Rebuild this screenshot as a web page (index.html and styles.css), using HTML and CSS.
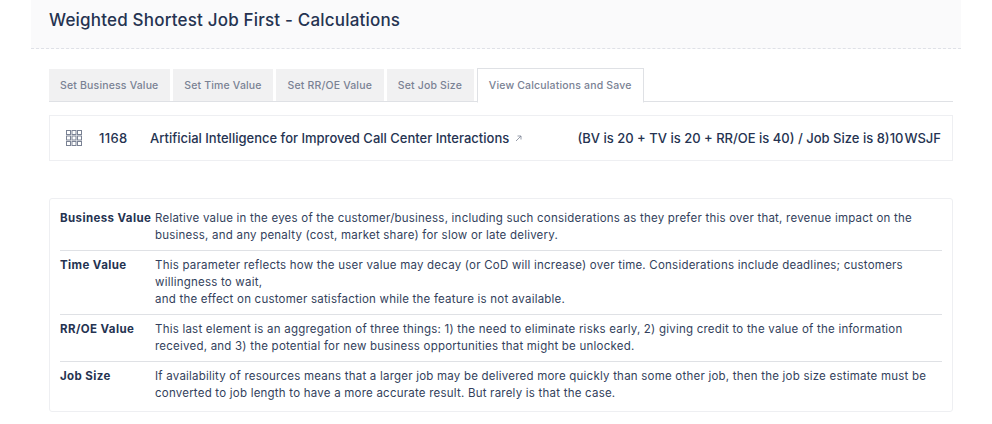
FILE: index.html
```html
<!DOCTYPE html>
<html lang="en">
<head>
    <meta charset="UTF-8">
    <title>Weighted Shortest Job First - Calculations</title>
    <link rel="stylesheet" href="styles.css">
</head>
<body>
    <div class="page">
        <div class="page-header">
            <h1>Weighted Shortest Job First - Calculations</h1>
        </div>
        <div class="content">
            <div class="tabs">
                <a class="tab">Set Business Value</a>
                <a class="tab">Set Time Value</a>
                <a class="tab">Set RR/OE Value</a>
                <a class="tab">Set Job Size</a>
                <a class="tab active">View Calculations and Save</a>
            </div>

            <div class="job-row">
                <svg class="grid-icon" width="16" height="16" viewBox="0 0 16 16" fill="none" stroke="#7a8294" stroke-width="1">
                    <rect x="0.5" y="0.5" width="4" height="4"/>
                    <rect x="6" y="0.5" width="4" height="4"/>
                    <rect x="11.5" y="0.5" width="4" height="4"/>
                    <rect x="0.5" y="6" width="4" height="4"/>
                    <rect x="6" y="6" width="4" height="4"/>
                    <rect x="11.5" y="6" width="4" height="4"/>
                    <rect x="0.5" y="11.5" width="4" height="4"/>
                    <rect x="6" y="11.5" width="4" height="4"/>
                    <rect x="11.5" y="11.5" width="4" height="4"/>
                </svg>
                <span class="job-id">1168</span>
                <span class="job-name">Artificial Intelligence for Improved Call Center Interactions</span>
                <svg class="ext-icon" width="7" height="7" viewBox="0 0 7 7" fill="none" stroke="#7c8494" stroke-width="0.8">
                    <path d="M1 6 L6 1 M2.5 1 H6 V4.5"/>
                </svg>
                <span class="job-calc">(BV is 20 + TV is 20 + RR/OE is 40) / Job Size is 8)</span>
                <span class="job-score">10</span>
                <span class="job-label">WSJF</span>
            </div>

            <table class="legend">
                <tr>
                    <th>Business Value</th>
                    <td>Relative value in the eyes of the customer/business, including such considerations as they prefer this over that, revenue impact on the business, and any penalty (cost, market share) for slow or late delivery.</td>
                </tr>
                <tr>
                    <th>Time Value</th>
                    <td>This parameter reflects how the user value may decay (or CoD will increase) over time. Considerations include deadlines; customers willingness to wait,<br>and the effect on customer satisfaction while the feature is not available.</td>
                </tr>
                <tr>
                    <th>RR/OE Value</th>
                    <td>This last element is an aggregation of three things: 1) the need to eliminate risks early, 2) giving credit to the value of the information received, and 3) the potential for new business opportunities that might be unlocked.</td>
                </tr>
                <tr>
                    <th>Job Size</th>
                    <td>If availability of resources means that a larger job may be delivered more quickly than some other job, then the job size estimate must be converted to job length to have a more accurate result. But rarely is that the case.</td>
                </tr>
            </table>
        </div>
    </div>
</body>
</html>
```

FILE: styles.css
```css
body {
    margin: 0;
    background: #fff;
    font-family: Inter, "Liberation Sans", sans-serif;
    color: #253351;
    overflow: hidden;
}

.page {
    margin: 0 31px;
}

.page-header {
    height: 48px;
    padding: 0 18px;
    display: flex;
    align-items: center;
    background: #fafafb;
    border-bottom: 1px dashed #dfe1e7;
}

h1 {
    margin: 0 0 9px;
    font-size: 17px;
    font-weight: 500;
    letter-spacing: 0.19px;
    color: #253351;
}

.content {
    padding: 20px 8px 0 18px;
}

.tabs {
    display: flex;
    gap: 3px;
    height: 33px;
    box-sizing: border-box;
    border-bottom: 1px solid #dfe1e5;
}

.tab {
    display: flex;
    align-items: center;
    padding: 0 11.75px 0 11px;
    height: 32px;
    background: #f1f1f2;
    font-size: 10.5px;
    font-weight: 500;
    letter-spacing: 0.17px;
    color: #7a8294;
}

.tab.active {
    height: 33px;
    margin-top: -1px;
    background: #fff;
    border: 1px solid #dfe1e5;
    border-bottom: 1px solid #fff;
    box-sizing: content-box;
}

.job-row {
    display: flex;
    align-items: center;
    height: 44px;
    margin-top: 13px;
    padding: 0 11px 0 16px;
    border: 1px solid #eeeff2;
    font-size: 13px;
    font-weight: 500;
}

.job-id {
    margin-left: 17px;
    width: 51px;
    letter-spacing: 0.3px;
}

.ext-icon {
    margin-left: 6px;
}

.job-calc {
    margin-left: auto;
}

.job-label {
    margin-left: 1px;
}

.legend {
    width: 100%;
    margin-top: 37px;
    padding: 5px 10px 3px 10px;
    border: 1px solid #eeeff2;
    border-radius: 3px;
    border-collapse: separate;
    border-spacing: 0;
    font-size: 11.5px;
    line-height: 17px;
}

.legend th,
.legend td {
    padding: 6px 0;
    vertical-align: top;
    border-bottom: 1px solid #dfe1e5;
    text-align: left;
}

.legend th {
    width: 95px;
    font-weight: 700;
    letter-spacing: 0.4px;
    white-space: nowrap;
}

.legend td {
    font-weight: 400;
    letter-spacing: 0.22px;
    color: #333f5c;
}

.legend tr:last-child th,
.legend tr:last-child td {
    border-bottom: none;
}
```
